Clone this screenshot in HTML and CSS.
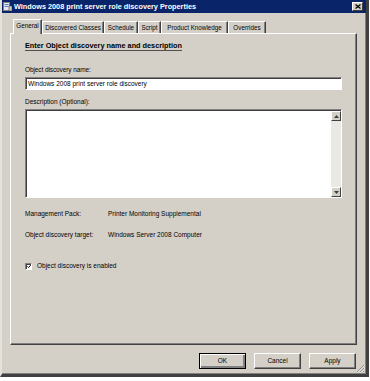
FILE: index.html
```html
<!DOCTYPE html>
<html>
<head>
<meta charset="utf-8">
<link rel="stylesheet" href="styles.css">
</head>
<body>
<div class="window">
  <div class="titlebar">
    <svg class="ticon" width="9" height="9" viewBox="0 0 9 9">
      <rect x="0.5" y="0.5" width="6" height="8" fill="#e8e8e8" stroke="#808080"/>
      <rect x="1.5" y="2" width="4" height="1" fill="#6080c0"/>
      <rect x="1.5" y="4" width="4" height="1" fill="#6080c0"/>
      <rect x="6" y="4" width="3" height="5" fill="#d4d0c8" stroke="#404040" stroke-width="0.6"/>
    </svg>
    <span class="title">Windows 2008 print server role discovery Properties</span>
    <span class="close">
      <svg width="6" height="5" viewBox="0 0 6 5"><path d="M0.5 0.5 L5.5 4.5 M5.5 0.5 L0.5 4.5" stroke="#000" stroke-width="1.2"/></svg>
    </span>
  </div>
  <div class="content">
    <div class="tabs">
      <div class="tab active t-general">General</div>
      <div class="tab t-classes">Discovered Classes</div>
      <div class="tab t-schedule">Schedule</div>
      <div class="tab t-script">Script</div>
      <div class="tab t-knowledge">Product Knowledge</div>
      <div class="tab t-overrides">Overrides</div>
    </div>
    <div class="panel">
      <div class="heading">Enter Object discovery name and description</div>
      <div class="label label-name">Object discovery name:</div>
      <div class="input">Windows 2008 print server role discovery</div>
      <div class="label label-desc">Description (Optional):</div>
      <div class="textarea">
        <div class="ta-text"></div>
        <div class="scroll">
          <div class="sbtn"><svg width="5" height="3" viewBox="0 0 5 3"><path d="M2.5 0 L5 3 L0 3 Z" fill="#404040"/></svg></div>
          <div class="track"></div>
          <div class="sbtn"><svg width="5" height="3" viewBox="0 0 5 3"><path d="M0 0 L5 0 L2.5 3 Z" fill="#404040"/></svg></div>
        </div>
      </div>
      <div class="info info-pack"><span class="key">Management Pack:</span><span>Printer Monitoring Supplemental</span></div>
      <div class="info info-target"><span class="key">Object discovery target:</span><span>Windows Server 2008 Computer</span></div>
      <div class="check">
        <span class="cbox"><svg width="5" height="5" viewBox="0 0 5 5"><path d="M0.5 2.3 L2 3.8 L4.6 0.8" stroke="#000" stroke-width="1.2" fill="none"/></svg></span>
        <span>Object discovery is enabled</span>
      </div>
    </div>
    <div class="buttons">
      <div class="btn default">OK</div>
      <div class="btn">Cancel</div>
      <div class="btn">Apply</div>
    </div>
  </div>
  <svg class="grip" width="9" height="9" viewBox="0 0 9 9">
    <path d="M8 1 L1 8 M8 4 L4 8 M8 7 L7 8" stroke="#808080" stroke-width="0.8"/>
    <path d="M8.6 1.6 L1.6 8.6 M8.6 4.6 L4.6 8.6" stroke="#fff" stroke-width="0.5"/>
  </svg>
</div>
</body>
</html>
```

FILE: styles.css
```css
* { box-sizing: border-box; }
html, body {
  margin: 0;
  padding: 0;
  background: #ffffff;
}
body {
  font-family: "Liberation Sans", Arial, sans-serif;
  font-size: 6.5px;
  color: #000;
}
.window {
  position: relative;
  width: 369px;
  height: 377px;
  background: #d4d0c8;
  border-left: 2px solid #e4e2dc;
  border-right: 3px solid #404040;
  border-bottom: 3px solid #404040;
  box-shadow: inset -1px -1px 0 #808080;
  display: flex;
  flex-direction: column;
}
.titlebar {
  height: 13px;
  background: #0a246a;
  display: flex;
  align-items: center;
  padding: 0 3px 0 1px;
  color: #fff;
}
.ticon { display: block; margin-right: 2px; }
.title {
  font-weight: bold;
  font-size: 7.3px;
  flex: 1;
}
.close {
  width: 11px;
  height: 9px;
  background: #d4d0c8;
  border-top: 1px solid #fff;
  border-left: 1px solid #fff;
  border-right: 1px solid #404040;
  border-bottom: 1px solid #404040;
  display: flex;
  align-items: center;
  justify-content: center;
}
.close svg { display: block; }
.content {
  flex: 1;
  display: flex;
  flex-direction: column;
  padding: 6px 9px 0 8px;
}
.tabs {
  display: flex;
  align-items: flex-end;
  padding-left: 3px;
  height: 14px;
  position: relative;
  z-index: 1;
}
.tab {
  height: 12px;
  line-height: 11px;
  font-size: 6.3px;
  text-align: center;
  border-top: 1px solid #fff;
  border-left: 1px solid #fff;
  border-right: 1px solid #404040;
  box-shadow: inset -1px 0 0 #808080;
  white-space: nowrap;
}
.tab.active {
  height: 15px;
  margin-bottom: -1px;
  background: #d4d0c8;
  line-height: 12px;
}
.t-general { width: 29px; }
.t-classes { width: 62px; }
.t-schedule { width: 34px; }
.t-script { width: 23px; }
.t-knowledge { width: 67px; }
.t-overrides { width: 38px; }
.panel {
  height: 312px;
  border-top: 1px solid #fff;
  border-left: 1px solid #fff;
  border-right: 1px solid #404040;
  border-bottom: 1px solid #404040;
  box-shadow: inset -1px -1px 0 #808080;
  padding: 8px 15px 0 14px;
  display: flex;
  flex-direction: column;
  align-items: flex-start;
}
.heading {
  font-weight: bold;
  font-size: 7.3px;
  line-height: 8px;
  border-bottom: 1px solid #505050;
}
.label {
  line-height: 8px;
}
.label-name { margin-top: 15px; letter-spacing: -0.1px; }
.label-desc { margin-top: 8px; }
.input {
  margin-top: 3px;
  width: 317px;
  height: 13px;
  background: #fff;
  border-top: 1px solid #808080;
  border-left: 1px solid #808080;
  border-right: 1px solid #fff;
  border-bottom: 1px solid #fff;
  box-shadow: inset 1px 1px 0 #404040, 1px 1px 0 #d4d0c8;
  line-height: 11px;
  padding-left: 2px;
}
.textarea {
  margin-top: 3px;
  width: 317px;
  height: 89px;
  background: #fff;
  border-top: 1px solid #808080;
  border-left: 1px solid #808080;
  border-right: 1px solid #fff;
  border-bottom: 1px solid #fff;
  box-shadow: inset 1px 1px 0 #404040;
  display: flex;
  padding: 1px 0 0 1px;
}
.ta-text { flex: 1; }
.scroll {
  width: 10px;
  display: flex;
  flex-direction: column;
  background: #ebe9e5;
}
.sbtn {
  height: 10px;
  background: #d4d0c8;
  border-top: 1px solid #fff;
  border-left: 1px solid #fff;
  border-right: 1px solid #404040;
  border-bottom: 1px solid #404040;
  display: flex;
  align-items: center;
  justify-content: center;
}
.sbtn svg { display: block; }
.track { flex: 1; }
.info {
  display: flex;
  line-height: 8px;
}
.info-pack { margin-top: 12px; }
.info-target { margin-top: 13px; }
.key { width: 83px; }
.check {
  margin-top: 23px;
  display: flex;
  align-items: center;
  line-height: 8px;
}
.cbox {
  width: 7px;
  height: 7px;
  background: #fff;
  border-top: 1px solid #808080;
  border-left: 1px solid #808080;
  border-right: 1px solid #fff;
  border-bottom: 1px solid #fff;
  box-shadow: inset 1px 1px 0 #404040;
  display: flex;
  align-items: center;
  justify-content: center;
  margin-right: 5px;
}
.cbox svg { display: block; margin: 1px 0 0 1px; }
.buttons {
  margin-top: 8px;
  display: flex;
  justify-content: flex-end;
  gap: 8px;
  padding-right: 1px;
}
.btn {
  width: 47px;
  height: 16px;
  line-height: 14px;
  text-align: center;
  border-top: 1px solid #fff;
  border-left: 1px solid #fff;
  border-right: 1px solid #404040;
  border-bottom: 1px solid #404040;
  box-shadow: inset -1px -1px 0 #808080;
}
.btn.default {
  border: 1px solid #000;
  box-shadow: inset 1px 1px 0 #fff, inset -2px -2px 0 #808080;
}
.grip {
  position: absolute;
  right: 1px;
  bottom: 1px;
  display: block;
}
```
